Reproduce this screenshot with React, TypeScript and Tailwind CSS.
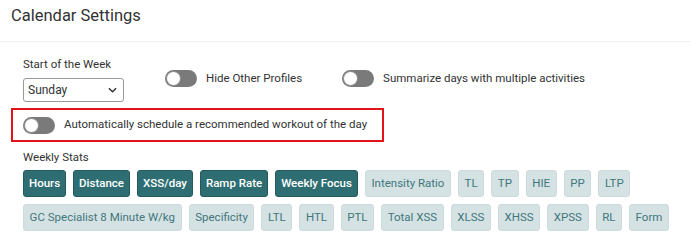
import React from "react";

const Toggle = () => (
  <div className="relative w-[32px] h-[17px] rounded-full bg-[#7a7a7a] shrink-0">
    <div className="absolute left-[1px] top-[1px] w-[15px] h-[15px] rounded-full bg-white border border-[#8a8a8a]" />
  </div>
);

const dark = ["Hours", "Distance", "XSS/day", "Ramp Rate", "Weekly Focus"];
const light1 = ["Intensity Ratio", "TL", "TP", "HIE", "PP", "LTP"];
const light2 = [
  "GC Specialist 8 Minute W/kg",
  "Specificity",
  "LTL",
  "HTL",
  "PTL",
  "Total XSS",
  "XLSS",
  "XHSS",
  "XPSS",
  "RL",
  "Form",
];

const Dark = ({ t }: { t: string }) => (
  <div className="h-[27px] px-[5px] flex items-center rounded-[3px] bg-[#2e6e72] border border-[#225a5e] text-white text-[11.5px] font-medium">
    {t}
  </div>
);
const Light = ({ t }: { t: string }) => (
  <div className="h-[27px] px-[5.6px] flex items-center rounded-[3px] bg-[#d5e2e4] border border-[#cddbdd] text-[#41777b] text-[11.5px]">
    {t}
  </div>
);

export default function App() {
  return (
    <div className="w-[690px] h-[245px] bg-white text-[#333] font-['Roboto',sans-serif] overflow-hidden">
      <div className="h-[42px] border-b border-[#eeeeee] pl-[11px] pt-[6px]">
        <h1 className="text-[16.5px] leading-[20px]">Calendar Settings</h1>
      </div>
      <div className="pl-[23px] pt-[13px]">
        <div className="flex items-center">
          <div className="flex flex-col">
            <span className="text-[11.5px] leading-[18px] mb-[5px]">Start of the Week</span>
            <div className="w-[101px] h-[24px] border border-[#999] rounded-[3px] flex items-center justify-between pl-[4px] pr-[6px] text-[12px]">
              <span>Sunday</span>
              <svg width="9" height="6" viewBox="0 0 10 6" fill="none">
                <path d="M1 1l4 4 4-4" stroke="#333" strokeWidth="1.6" />
              </svg>
            </div>
          </div>
          <div className="flex items-center ml-[41px] gap-[9px]">
            <Toggle />
            <span className="text-[11.5px]">Hide Other Profiles</span>
          </div>
          <div className="flex items-center ml-[40px] gap-[9px]">
            <Toggle />
            <span className="text-[11.5px]">Summarize days with multiple activities</span>
          </div>
        </div>
        <div className="ml-[-12px] mt-[6px] w-[373px] h-[34px] border-2 border-[#e3131b] pl-[10px] flex items-center gap-[9px]">
          <Toggle />
          <span className="text-[11.5px]">Automatically schedule a recommended workout of the day</span>
        </div>
        <div className="text-[11.5px] leading-[18px] mt-[6px]">Weekly Stats</div>
        <div className="flex flex-wrap gap-[7px] mt-[4px]">
          {dark.map((t) => (
            <Dark key={t} t={t} />
          ))}
          {light1.map((t) => (
            <Light key={t} t={t} />
          ))}
        </div>
        <div className="flex flex-wrap gap-[7px] mt-[7px]">
          {light2.map((t) => (
            <Light key={t} t={t} />
          ))}
        </div>
      </div>
    </div>
  );
}
